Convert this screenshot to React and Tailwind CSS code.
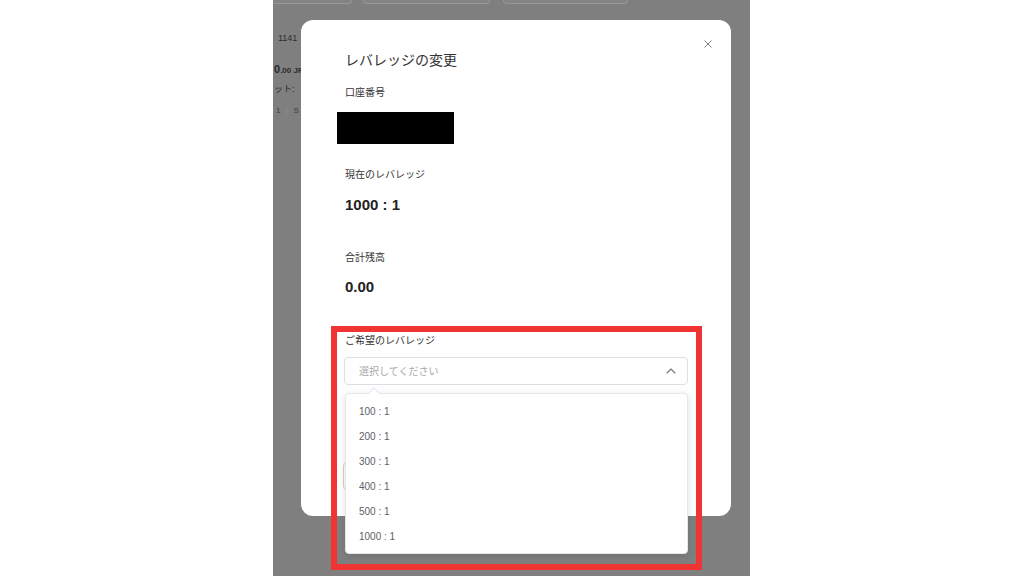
import React from "react";

const font = { fontFamily: '"Liberation Sans", "Noto Sans CJK JP", sans-serif' };

function CloseIcon() {
  return (
    <svg width="8" height="8" viewBox="0 0 8 8" fill="none">
      <path d="M0.8 0.8L7.2 7.2M7.2 0.8L0.8 7.2" stroke="#6f6f6f" strokeWidth="0.9" strokeLinecap="round" />
    </svg>
  );
}

function ChevronUp() {
  return (
    <svg width="10" height="6" viewBox="0 0 10 6" fill="none">
      <path d="M1 5L5 1L9 5" stroke="#777" strokeWidth="1.1" strokeLinecap="round" strokeLinejoin="round" />
    </svg>
  );
}

const options = ["100 : 1", "200 : 1", "300 : 1", "400 : 1", "500 : 1", "1000 : 1"];

export default function App() {
  return (
    <div className="relative w-[1024px] h-[576px] bg-white overflow-hidden" style={font}>
      <div className="relative ml-[273px] w-[477px] h-full bg-[#7f7f7f] overflow-hidden">
        {/* background page under overlay */}
        <div className="flex gap-[11px] ml-[-10px]">
          <div className="w-[89px] h-[4px] rounded-b-[4px] border border-t-0 border-[#979797] bg-[#838383]" />
          <div className="w-[127px] h-[4px] rounded-b-[4px] border border-t-0 border-[#979797] bg-[#838383]" />
          <div className="ml-[2px] w-[125px] h-[4px] rounded-b-[4px] border border-t-0 border-[#979797] bg-[#838383]" />
        </div>
        <div className="mt-[28px] pl-[5px] text-[9px] leading-[12px] text-[#2e2e2e]">1141</div>
        <div className="mt-[18px] pl-[1px] flex items-baseline text-[#2a2a2a] leading-[14px]">
          <span className="text-[11px] font-bold">0</span>
          <span className="text-[8px] font-bold">.00 JP</span>
        </div>
        <div className="mt-[5px] pl-[1px] text-[9px] leading-[12px] text-[#2e2e2e]">ット:</div>
        <div className="mt-[10px] pl-[3px] flex items-center gap-[6px] text-[8px] leading-[12px] text-[#3a3a3a]">
          <span>1</span>
          <span className="w-px h-[8px] bg-[#8a8a8a]" />
          <span>S</span>
        </div>

        {/* modal */}
        <div className="absolute left-[28px] top-[20px] w-[430px] h-[496px] bg-white rounded-[12px] pl-[44px] pt-[30px]">
          <button className="absolute left-[403px] top-[20px] w-[8px] h-[8px] flex items-center justify-center">
            <CloseIcon />
          </button>
          <div className="text-[14px] leading-[20px] text-[#333]">レバレッジの変更</div>
          <div className="mt-[16px] text-[10px] leading-[14px] text-[#333]">口座番号</div>
          <div className="mt-[12px] ml-[-8px] w-[117px] h-[32px] bg-black" />
          <div className="mt-[24px] text-[10px] leading-[14px] text-[#333]">現在のレバレッジ</div>
          <div className="mt-[13px] text-[15px] leading-[20px] font-bold text-[#222]">1000 : 1</div>
          <div className="mt-[36px] text-[10px] leading-[14px] text-[#333]">合計残高</div>
          <div className="mt-[12px] text-[15px] leading-[20px] font-bold text-[#222]">0.00</div>
          <div className="mt-[37px] text-[10px] leading-[14px] text-[#333]">ご希望のレバレッジ</div>
          <div className="mt-[9px] ml-[-1px] w-[344px] h-[28px] rounded-[4px] border border-[#dcdfe6] flex items-center justify-between pl-[14px] pr-[11px]">
            <span className="text-[10px] text-[#a8a8a8]">選択してください</span>
            <ChevronUp />
          </div>
          <div className="mt-[77px] ml-[-2px] w-[120px] h-[28px] rounded-[4px] border border-[#dcd3c4] bg-white" />
        </div>

        {/* dropdown */}
        <div className="absolute left-[72px] top-[393px] w-[343px] h-[161px] bg-white rounded-[4px] border border-[#e4e7ed] shadow-[0_2px_8px_rgba(0,0,0,0.12)] pt-[5px]">
          <div className="absolute left-[24px] top-[-5px] w-[8px] h-[8px] rotate-45 bg-white border-l border-t border-[#e4e7ed]" />
          {options.map((o) => (
            <div key={o} className="h-[25px] flex items-center pl-[13px] text-[10px] text-[#606266]">
              {o}
            </div>
          ))}
        </div>
      </div>

      {/* red annotation */}
      <div className="absolute left-[331px] top-[326px] w-[371px] h-[244px] border-[6px] border-[#f03434]" />
    </div>
  );
}
